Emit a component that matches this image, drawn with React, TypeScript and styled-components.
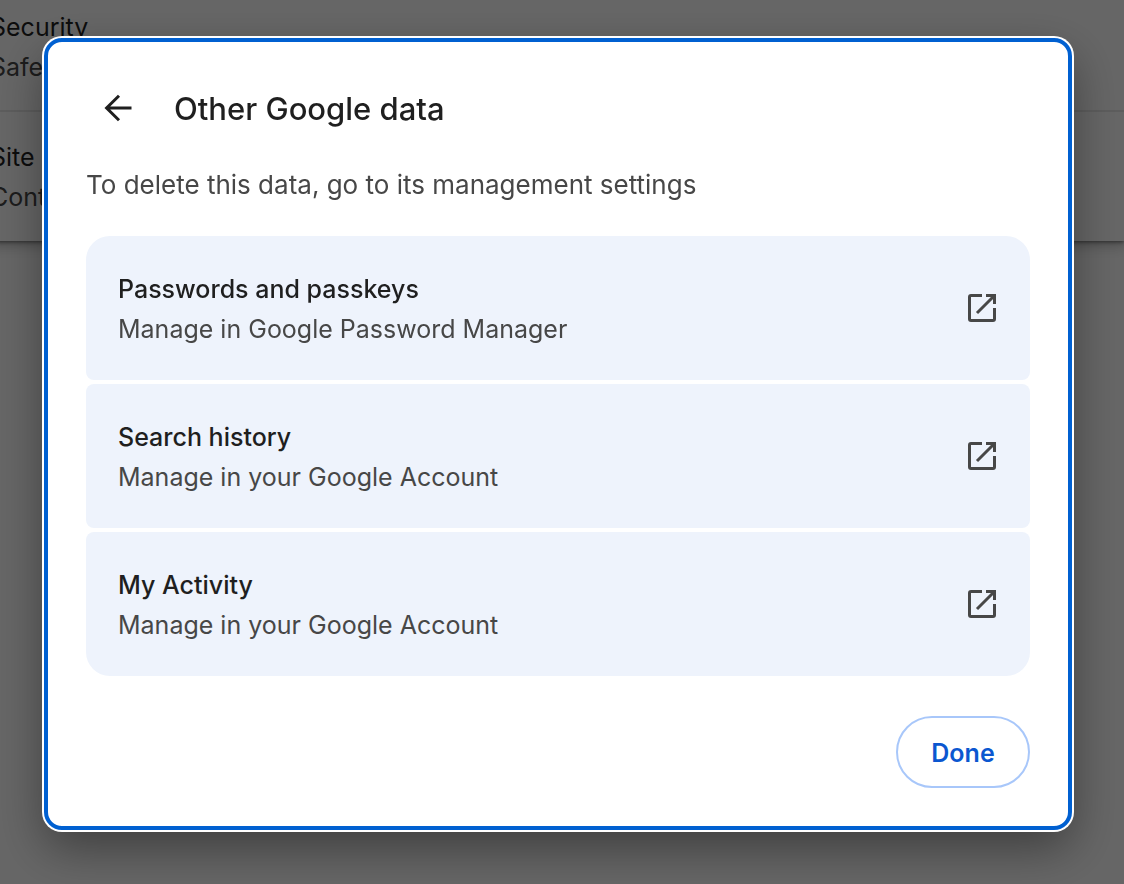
import React from "react";
import styled, { createGlobalStyle } from "styled-components";

const GlobalStyle = createGlobalStyle`
  *, *::before, *::after { box-sizing: border-box; }
  body {
    margin: 0;
    background: #fff;
    font-family: Inter, "Liberation Sans", sans-serif;
    font-size: 25px;
    line-height: 40px;
    color: #1f1f1f;
  }
`;

const Page = styled.div`
  min-height: 100vh;
  overflow: hidden;
`;

const SettingsCard = styled.main`
  margin-left: -10px;
  box-shadow: 0 1px 4px rgba(0, 0, 0, 0.5), 0 4px 12px 2px rgba(0, 0, 0, 0.2);
`;

const SettingsRow = styled.section`
  padding: 25px 0 24px;

  & + & {
    border-top: 2px solid #e8e8e8;
  }

  &:first-child {
    padding: 7px 0 23px;
  }
`;

const RowTitle = styled.div`
  color: #1f1f1f;
`;

const RowDetail = styled.div`
  color: #474747;
`;

const Backdrop = styled.div`
  position: fixed;
  inset: 0;
  padding: 38px 52px 54px 44px;
  overflow: auto;
  background: rgba(0, 0, 0, 0.6);
`;

const Dialog = styled.div`
  padding: 34px 38px 38px;
  border: 4px solid #0060d1;
  border-radius: 18px;
  background: #fff;
  box-shadow: 0 0 0 2px #fff, 0 18px 48px rgba(0, 0, 0, 0.4);
`;

const Header = styled.header`
  display: flex;
  align-items: center;
  gap: 24px;
`;

const BackButton = styled.button`
  display: grid;
  place-items: center;
  width: 64px;
  height: 64px;
  padding: 0;
  border: 0;
  border-radius: 50%;
  background: transparent;
  color: #1f1f1f;
`;

const Title = styled.h1`
  margin: 0;
  padding-top: 2px;
  font-size: 31px;
  font-weight: 500;
  line-height: 48px;
`;

const Description = styled.p`
  margin: 25px 0 31px;
  font-size: 26px;
  color: #474747;
`;

const LinkList = styled.nav`
  display: grid;
  gap: 4px;
`;

const LinkRow = styled.a`
  display: flex;
  align-items: center;
  justify-content: space-between;
  gap: 32px;
  min-height: 144px;
  padding: 0 32px;
  border-radius: 8px;
  background: #eef3fc;
  color: #474747;
  text-decoration: none;

  &:first-child {
    border-top-left-radius: 24px;
    border-top-right-radius: 24px;
  }

  &:last-child {
    border-bottom-left-radius: 24px;
    border-bottom-right-radius: 24px;
  }
`;

const LinkText = styled.div`
  padding-top: 2px;
`;

const LinkTitle = styled.div`
  font-weight: 500;
  color: #1f1f1f;
`;

const LinkDetail = styled.div`
  color: #474747;
`;

const Footer = styled.footer`
  display: flex;
  justify-content: flex-end;
  margin-top: 40px;
`;

const DoneButton = styled.button`
  min-width: 134px;
  height: 72px;
  padding: 2px 32px 0;
  border: 2px solid #a8c7fa;
  border-radius: 36px;
  background: #fff;
  color: #0b57d0;
  font: inherit;
  font-weight: 600;
`;

const Icon = styled.svg`
  display: block;
  flex: none;
`;

function BackIcon() {
  return (
    <Icon width="32" height="32" viewBox="0 0 32 32" fill="none" stroke="currentColor" strokeWidth="3" aria-hidden="true">
      <path d="M29.500 16H5M17 3.700L4.600 16L17 28.300" />
    </Icon>
  );
}

function OpenIcon() {
  return (
    <Icon width="32" height="32" viewBox="0 0 32 32" fill="none" stroke="currentColor" strokeWidth="3" aria-hidden="true">
      <path d="M16 3.500H5A1.500 1.500 0 0 0 3.500 5V27A1.500 1.500 0 0 0 5 28.500H27A1.500 1.500 0 0 0 28.500 27V16" />
      <path d="M20 3.500H28.500V12M28 4L11 21" />
    </Icon>
  );
}

const links = [
  { title: "Passwords and passkeys", detail: "Manage in Google Password Manager" },
  { title: "Search history", detail: "Manage in your Google Account" },
  { title: "My Activity", detail: "Manage in your Google Account" },
];

export default function App() {
  return (
    <Page>
      <GlobalStyle />
      <SettingsCard>
        <SettingsRow>
          <RowTitle>Security</RowTitle>
          <RowDetail>Safe</RowDetail>
        </SettingsRow>
        <SettingsRow>
          <RowTitle>Site</RowTitle>
          <RowDetail>Cont</RowDetail>
        </SettingsRow>
      </SettingsCard>
      <Backdrop>
        <Dialog role="dialog" aria-modal="true" aria-labelledby="dialog-title">
          <Header>
            <BackButton type="button" aria-label="Back">
              <BackIcon />
            </BackButton>
            <Title id="dialog-title">Other Google data</Title>
          </Header>
          <Description>To delete this data, go to its management settings</Description>
          <LinkList>
            {links.map((link) => (
              <LinkRow href="#" key={link.title}>
                <LinkText>
                  <LinkTitle>{link.title}</LinkTitle>
                  <LinkDetail>{link.detail}</LinkDetail>
                </LinkText>
                <OpenIcon />
              </LinkRow>
            ))}
          </LinkList>
          <Footer>
            <DoneButton type="button">Done</DoneButton>
          </Footer>
        </Dialog>
      </Backdrop>
    </Page>
  );
}
